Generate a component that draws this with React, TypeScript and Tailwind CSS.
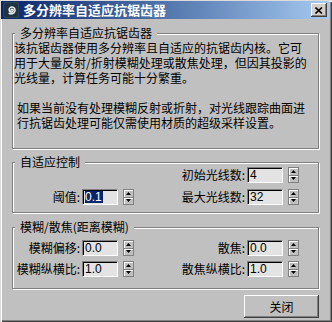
import React from 'react';

const cjk = "font-['Noto_Sans_CJK_SC','Liberation_Sans',sans-serif]";

function Spinner() {
  return (
    <div className="ml-[5px] flex h-[16px] w-[11px] flex-col border border-[#808080] bg-[#c0c0c0]">
      <div className="flex flex-1 items-center justify-center border-b border-[#808080] shadow-[inset_1px_1px_0_#fff]">
        <svg width="5" height="3" viewBox="0 0 5 3">
          <polygon points="0,3 2.5,0 5,3" fill="#000" />
        </svg>
      </div>
      <div className="flex flex-1 items-center justify-center shadow-[inset_1px_1px_0_#fff]">
        <svg width="5" height="3" viewBox="0 0 5 3">
          <polygon points="0,0 5,0 2.5,3" fill="#000" />
        </svg>
      </div>
    </div>
  );
}

function Field({ label, value, selected }: { label: string; value: string; selected?: boolean }) {
  return (
    <div className="flex items-center justify-end">
      <span className="whitespace-nowrap text-[12px] leading-[16px]">{label}</span>
      <div className="ml-[2px] flex h-[16px] w-[36px] items-center border border-t-[#808080] border-l-[#808080] border-b-white border-r-white bg-[#e3e3e3] pl-[2px] shadow-[inset_1px_1px_0_#000]">
        <span
          className={`font-['Liberation_Sans',sans-serif] text-[12px] leading-[12px] ${
            selected ? 'bg-[#0a246a] pr-[1px] text-white' : 'text-black'
          }`}
        >
          {value}
        </span>
      </div>
      <Spinner />
    </div>
  );
}

function GroupBox({ title, className, children }: { title: string; className: string; children?: React.ReactNode }) {
  return (
    <div className={`relative border border-[#808080] shadow-[inset_1px_1px_0_#fff,1px_1px_0_#fff] ${className}`}>
      <span className="absolute -top-[9px] left-[2px] bg-[#c0c0c0] px-[5px] text-[12px] leading-[16px] whitespace-nowrap">
        {title}
      </span>
      {children}
    </div>
  );
}

export default function App() {
  return (
    <div
      className={`flex h-[322px] w-[332px] flex-col bg-[#c0c0c0] pl-[1px] pr-[3px] pt-[1px] text-black shadow-[inset_1px_1px_0_#dcdcdc,inset_2px_2px_0_#fff,inset_-1px_-1px_0_#404040,inset_-2px_-2px_0_#808080] ${cjk}`}
    >
      {/* title bar */}
      <div className="flex h-[18px] items-center bg-gradient-to-r from-[#0a246a] to-[#a6caf0] pl-[2px] pr-[2px]">
        <svg width="16" height="16" viewBox="0 0 16 16">
          <rect x="0" y="0" width="16" height="16" rx="2" fill="#2c4656" />
          <rect x="1" y="1" width="14" height="14" rx="2" fill="#1e3442" />
          <path
            d="M8 8.2c0-.9.9-1.3 1.6-.8.9.6.6 2.1-.5 2.5-1.5.5-3-.6-3-2.2 0-1.9 1.9-3.1 3.7-2.6 2 .6 2.8 2.9 1.9 4.7-1 2-3.7 2.6-5.6 1.5"
            fill="none"
            stroke="#fff"
            strokeWidth="1.4"
            strokeLinecap="round"
          />
        </svg>
        <span className="ml-[4px] text-[13px] font-bold leading-[16px] text-white whitespace-nowrap">
          多分辨率自适应抗锯齿器
        </span>
        <div className="ml-auto flex h-[14px] w-[16px] items-center justify-center bg-[#d4d0c8] shadow-[inset_-1px_-1px_0_#404040,inset_1px_1px_0_#fff,inset_-2px_-2px_0_#808080]">
          <svg width="8" height="7" viewBox="0 0 8 7">
            <path d="M0.5 0.5L7 6.5M7 0.5L0.5 6.5" stroke="#000" strokeWidth="1.6" />
          </svg>
        </div>
      </div>

      {/* body */}
      <div className="flex flex-1 flex-col pl-[11px] pr-[10px]">
        <GroupBox title="多分辨率自适应抗锯齿器" className="mt-[14px] h-[116px]">
          <div className="pl-[1px] pt-[6px] text-[12px] leading-[15px] whitespace-nowrap">
            <div>该抗锯齿器使用多分辨率且自适应的抗锯齿内核。它可</div>
            <div>用于大量反射/折射模糊处理或散焦处理，但因其投影的</div>
            <div>光线量，计算任务可能十分繁重。</div>
            <div className="h-[15px]" />
            <div className="pl-[3px]">如果当前没有处理模糊反射或折射，对光线跟踪曲面进</div>
            <div className="pl-[3px]">行抗锯齿处理可能仅需使用材质的超级采样设置。</div>
          </div>
        </GroupBox>

        <GroupBox title="自适应控制" className="mt-[13px] h-[51px]">
          <div className="flex flex-col gap-[6px] pt-[4px]">
            <div className="flex">
              <div className="w-[121px]" />
              <div className="w-[165px]">
                <Field label="初始光线数:" value="4" />
              </div>
            </div>
            <div className="flex">
              <div className="w-[121px]">
                <Field label="阈值:" value="0.1" selected />
              </div>
              <div className="w-[165px]">
                <Field label="最大光线数:" value="32" />
              </div>
            </div>
          </div>
        </GroupBox>

        <GroupBox title="模糊/散焦(距离模糊)" className="mt-[14px] h-[62px]">
          <div className="flex flex-col gap-[5px] pt-[12px]">
            <div className="flex">
              <div className="w-[121px]">
                <Field label="模糊偏移:" value="0.0" />
              </div>
              <div className="w-[165px]">
                <Field label="散焦:" value="0.0" />
              </div>
            </div>
            <div className="flex">
              <div className="w-[121px]">
                <Field label="模糊纵横比:" value="1.0" />
              </div>
              <div className="w-[165px]">
                <Field label="散焦纵横比:" value="1.0" />
              </div>
            </div>
          </div>
        </GroupBox>

        <div className="mt-[6px] flex justify-end">
          <button className="flex h-[23px] w-[75px] items-center justify-center bg-[#c0c0c0] text-[12px] leading-[16px] shadow-[inset_-1px_-1px_0_#404040,inset_1px_1px_0_#fff,inset_-2px_-2px_0_#808080]">
            关闭
          </button>
        </div>
      </div>
    </div>
  );
}
